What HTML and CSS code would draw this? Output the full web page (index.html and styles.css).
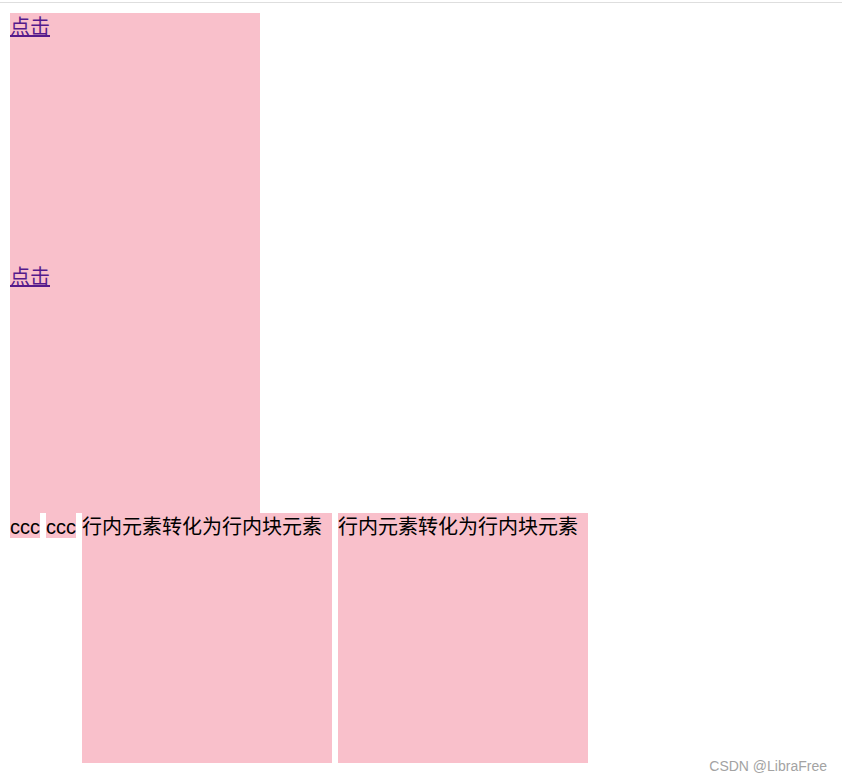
FILE: index.html
```html
<!DOCTYPE html>
<html lang="zh">
<head>
<meta charset="utf-8">
<title>行内块元素</title>
<link rel="stylesheet" href="styles.css">
</head>
<body>
<div class="top-rule"></div>
<main class="page">
  <a class="blk" href="#">点击</a>
  <a class="blk" href="#">点击</a>
  <div class="row"><span class="tag">ccc</span> <span class="tag">ccc</span> <span class="ib">行内元素转化为行内块元素</span> <span class="ib">行内元素转化为行内块元素</span></div>
</main>
<div class="watermark">CSDN @LibraFree</div>
</body>
</html>
```

FILE: styles.css
```css
html, body {
  margin: 0;
  padding: 0;
  background: #fff;
}
body {
  font-family: "Liberation Sans", "Noto Sans CJK SC", sans-serif;
  font-size: 20px;
  line-height: 28px;
  color: #000;
  position: relative;
  min-height: 781px;
}
.top-rule {
  height: 2px;
  border-bottom: 1px solid #dedede;
}
.page {
  padding: 10px 0 0 10px;
}
.blk {
  display: block;
  width: 250px;
  height: 250px;
  background: #f9c0cb;
  color: #551a8b;
  text-decoration: underline;
}
.row {
  white-space: nowrap;
  word-spacing: 0.45px;
}
.tag {
  background: #f9c0cb;
  padding: 3px 0 0;
}
.ib {
  display: inline-block;
  width: 250px;
  height: 250px;
  background: #f9c0cb;
  vertical-align: baseline;
  word-spacing: normal;
}
.watermark {
  position: absolute;
  right: 15px;
  top: 757px;
  font-family: "Liberation Sans", sans-serif;
  font-size: 14px;
  line-height: 18px;
  color: #a3a3a3;
}
```
